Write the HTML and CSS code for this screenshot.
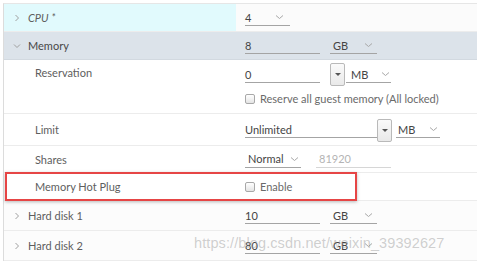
FILE: index.html
```html
<!DOCTYPE html>
<html lang="en">
<head>
  <meta charset="UTF-8">
  <meta name="viewport" content="width=device-width, initial-scale=1.0">
  <title>Memory settings</title>
<link rel="stylesheet" href="styles.css">
</head>
<body>
  <div class="grid">

    <div class="row row-cpu">
      <div class="label">
        <svg class="caret" width="6" height="8" viewBox="0 0 6 8"><path d="M1.5 1 L4.5 4 L1.5 7" /></svg>
        <em>CPU *</em>
      </div>
      <div class="value">
        <div class="field w-cpu">4 <svg class="chev" width="9" height="6" viewBox="0 0 9 6"><path d="M1 1.5 L4.5 4.5 L8 1.5" /></svg></div>
      </div>
    </div>

    <div class="row row-memory">
      <div class="label">
        <svg class="caret" width="8" height="6" viewBox="0 0 8 6"><path d="M1 1.5 L4 4.5 L7 1.5" /></svg>
        Memory
      </div>
      <div class="value">
        <div class="field w-num">8</div>
        <div class="field w-unit">GB <svg class="chev" width="9" height="6" viewBox="0 0 9 6"><path d="M1 1.5 L4.5 4.5 L8 1.5" /></svg></div>
      </div>
    </div>

    <div class="row row-reservation">
      <div class="label sub top">Reservation</div>
      <div class="value stack">
        <div class="line">
          <div class="field w-num">0</div>
          <div class="btn"><span class="tri"></span></div>
          <div class="field w-mb">MB <svg class="chev" width="9" height="6" viewBox="0 0 9 6"><path d="M1 1.5 L4.5 4.5 L8 1.5" /></svg></div>
        </div>
        <label class="check"><span class="box"></span>Reserve all guest memory (All locked)</label>
      </div>
    </div>

    <div class="row row-limit">
      <div class="label sub">Limit</div>
      <div class="value">
        <div class="field w-limit">Unlimited</div>
        <div class="btn"><span class="tri"></span></div>
        <div class="field w-mb2">MB <svg class="chev" width="9" height="6" viewBox="0 0 9 6"><path d="M1 1.5 L4.5 4.5 L8 1.5" /></svg></div>
      </div>
    </div>

    <div class="row row-shares">
      <div class="label sub">Shares</div>
      <div class="value">
        <div class="field w-shares">Normal <svg class="chev" width="9" height="6" viewBox="0 0 9 6"><path d="M1 1.5 L4.5 4.5 L8 1.5" /></svg></div>
        <div class="field w-muted">81920</div>
      </div>
    </div>

    <div class="row row-hotplug">
      <div class="label sub">Memory Hot Plug</div>
      <div class="value">
        <label class="check"><span class="box"></span>Enable</label>
      </div>
    </div>

    <div class="row row-disk">
      <div class="label">
        <svg class="caret" width="6" height="8" viewBox="0 0 6 8"><path d="M1.5 1 L4.5 4 L1.5 7" /></svg>
        Hard disk 1
      </div>
      <div class="value">
        <div class="field w-num">10</div>
        <div class="field w-unit">GB <svg class="chev" width="9" height="6" viewBox="0 0 9 6"><path d="M1 1.5 L4.5 4.5 L8 1.5" /></svg></div>
      </div>
    </div>

    <div class="row row-disk">
      <div class="label">
        <svg class="caret" width="6" height="8" viewBox="0 0 6 8"><path d="M1.5 1 L4.5 4 L1.5 7" /></svg>
        Hard disk 2
      </div>
      <div class="value">
        <div class="field w-num">80</div>
        <div class="field w-unit">GB <svg class="chev" width="9" height="6" viewBox="0 0 9 6"><path d="M1 1.5 L4.5 4.5 L8 1.5" /></svg></div>
      </div>
    </div>

    <!-- annotation drawn over the screenshot -->
    <div class="highlight"></div>
    <div class="watermark">https://blog.csdn.net/weixin_39392627</div>
  </div>
</body>
</html>
```

FILE: styles.css
```css
body {
  margin: 0;
  background: #fff;
  font-family: Lato, "Noto Sans", sans-serif;
  font-size: 11px;
  color: #5e5e5e;
  overflow: hidden;
}

.grid {
  position: relative;
  margin: 3px 0 0 3px;
  border-top: 1px solid #e6e6e6;
  border-left: 1px solid #dcdcdc;
}

.row {
  display: grid;
  grid-template-columns: 232px 1fr;
  border-bottom: 1px solid #ececec;
}

.label {
  display: flex;
  align-items: center;
  padding-left: 9px;
}

.label em {
  font-style: italic;
}

.label.sub {
  padding-left: 31px;
}

.label.top {
  align-items: flex-start;
  padding-top: 6px;
}

.caret {
  width: 8px;
  margin-right: 7px;
  fill: none;
  stroke: #a0a0a0;
  stroke-width: 1;
}

.value {
  display: flex;
  align-items: center;
  padding-left: 9px;
  gap: 10px;
}

.value.stack {
  flex-direction: column;
  align-items: flex-start;
  justify-content: flex-start;
  padding-top: 3px;
  gap: 6px;
}

.line {
  display: flex;
  align-items: center;
}

/* rows */
.row-cpu {
  height: 27px;
}
.row-cpu .label {
  background: #e1fafd;
}
.row-cpu .value {
  background: #fbfbfb;
}

.row-memory {
  height: 27px;
  background: #dce3ea;
  border-bottom-color: #d2d9e0;
}
.row-memory .label {
  color: #484848;
}

.row-reservation {
  height: 53px;
}

.row-limit {
  height: 31px;
}
.row-limit .value {
  gap: 0;
}

.row-shares {
  height: 26px;
}

.row-hotplug {
  height: 27px;
}

.row-disk {
  height: 29px;
  background: #fcfcfc;
}

/* controls */
.field {
  display: flex;
  align-items: center;
  justify-content: space-between;
  height: 17px;
  border-bottom: 1px solid #a4a4a4;
  color: #444;
  padding-right: 4px;
  box-sizing: border-box;
}

.chev {
  fill: none;
  stroke: #a8a8a8;
  stroke-width: 1;
  margin-left: 8px;
  flex: none;
}

.w-cpu {
  width: 45px;
  justify-content: flex-start;
}
.w-cpu .chev {
  margin-left: 24px;
}

.w-num {
  width: 75px;
}

.w-unit {
  width: 47px;
  justify-content: flex-start;
  padding-left: 3px;
}
.w-unit .chev {
  margin-left: 16px;
}

.w-mb {
  width: 45px;
  justify-content: flex-start;
  margin-left: 1px;
  padding-left: 5px;
}
.w-mb .chev {
  margin-left: 13px;
}

.w-limit {
  width: 132px;
}

.w-mb2 {
  width: 44px;
  justify-content: flex-start;
  margin-left: 4px;
  padding-left: 2px;
}
.w-mb2 .chev {
  margin-left: 14px;
}

.w-shares {
  width: 56px;
  justify-content: flex-start;
  padding-left: 3px;
  padding-right: 0;
}
.w-shares .chev {
  margin-left: 6px;
}

.w-muted {
  width: 75px;
  color: #b4b4b4;
  border-bottom-color: #d6d6d6;
  margin-left: 5px;
  padding-left: 3px;
}

.btn {
  display: flex;
  align-items: center;
  justify-content: center;
  width: 15px;
  height: 23px;
  border: 1px solid #b9b9b9;
  border-radius: 2px;
  background: linear-gradient(#fafafa, #e9e9e9);
  box-sizing: border-box;
  margin-left: 10px;
  flex: none;
}

.row-limit .btn {
  margin-left: 0;
  position: relative;
  top: 1px;
}

.tri {
  width: 0;
  height: 0;
  border: 3px solid transparent;
  border-top: 3px solid #555;
  margin-top: 3px;
}

.check {
  display: flex;
  align-items: center;
  color: #6a6a6a;
}

.box {
  width: 8px;
  height: 8px;
  border: 1px solid #a8a8a8;
  border-radius: 2px;
  background: linear-gradient(#fff, #e4e4e4);
  margin-right: 5px;
}

.highlight {
  position: absolute;
  left: 1px;
  top: 168px;
  width: 348px;
  height: 25px;
  border: 2px solid #e64545;
  box-shadow: 0 1px 3px rgba(120, 120, 120, 0.5);
  pointer-events: none;
}

.watermark {
  position: absolute;
  left: 190px;
  top: 231px;
  font-family: "Liberation Sans", Arial, sans-serif;
  font-size: 14.5px;
  color: rgba(150, 150, 150, 0.45);
  letter-spacing: 0.1px;
  pointer-events: none;
}
```
